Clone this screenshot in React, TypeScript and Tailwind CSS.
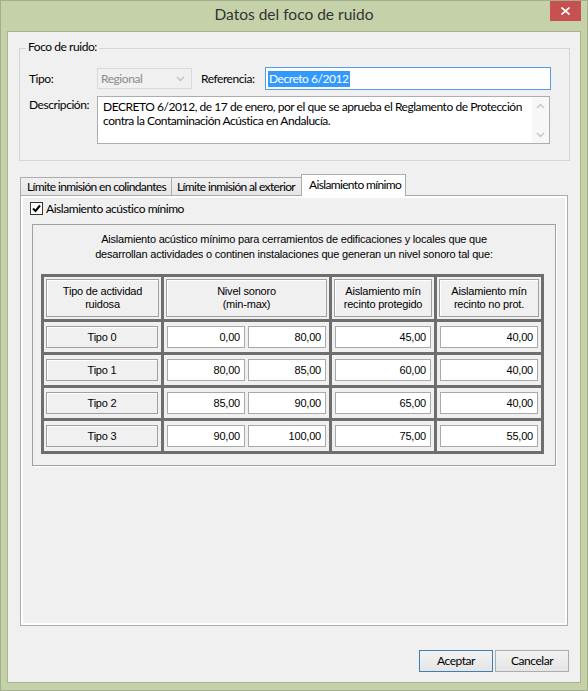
import React from "react"

const rows = [
  { tipo: "Tipo 0", min: "0,00", max: "80,00", prot: "45,00", noProt: "40,00" },
  { tipo: "Tipo 1", min: "80,00", max: "85,00", prot: "60,00", noProt: "40,00" },
  { tipo: "Tipo 2", min: "85,00", max: "90,00", prot: "65,00", noProt: "40,00" },
  { tipo: "Tipo 3", min: "90,00", max: "100,00", prot: "75,00", noProt: "55,00" },
]

function Chevron({ up = false, color = "#b5b5b5" }: { up?: boolean; color?: string }) {
  return (
    <svg width="9" height="6" viewBox="0 0 9 6">
      <path d={up ? "M1 5 L4.5 1.5 L8 5" : "M1 1 L4.5 4.5 L8 1"} fill="none" stroke={color} strokeWidth="1.3" />
    </svg>
  )
}

function LabelBox({ children, tall = false }: { children: React.ReactNode; tall?: boolean }) {
  return (
    <div
      className={`flex-1 flex items-center justify-center text-center border border-[#a0a0a0] shadow-[inset_1px_1px_0_#ffffff] bg-[#f0f0f0] ${
        tall ? "leading-[13px]" : ""
      }`}
    >
      {children}
    </div>
  )
}

function NumBox({ value }: { value: string }) {
  return (
    <div className="flex-1 h-full flex items-center justify-end pr-[4px] bg-white border border-[#a9a9a9]">
      {value}
    </div>
  )
}

export default function App() {
  return (
    <div className="w-[588px] h-[691px] bg-[#c5d1a9] border border-[#a3ae8b] relative font-['Lato',sans-serif] text-[12px] tracking-[-0.45px] text-black">
      {/* Title bar */}
      <div className="h-[30px] flex items-center justify-center pb-[2px] text-[15.5px] tracking-normal text-[#333333]">
        Datos del foco de ruido
      </div>
      <div className="absolute top-0 right-[6px] w-[31px] h-[20px] bg-[#c75050] flex items-center justify-center">
        <svg width="9" height="8" viewBox="0 0 9 8">
          <path d="M0.5 0.5 L8.5 7.5 M8.5 0.5 L0.5 7.5" stroke="#ffffff" strokeWidth="1.6" />
        </svg>
      </div>

      {/* Client area */}
      <div className="ml-[6px] w-[574px] h-[652px] bg-[#f0f0f0] border border-[#a9b391] flex flex-col">
        {/* Group box */}
        <div className="relative mt-[16px] ml-[11px] w-[551px] h-[113px] border border-[#d5d5d5] pt-[18px] pl-[9px]">
          <span className="absolute -top-[10px] left-[6px] px-[2px] bg-[#f0f0f0] leading-[16px]">Foco de ruido:</span>

          <div className="flex items-center h-[23px]">
            <div className="w-[68px]">Tipo:</div>
            <div className="w-[95px] h-[21px] border border-[#d9d9d9] bg-[#f0f0f0] flex items-center justify-between pl-[3px] pr-[6px] text-[#8a8a8a]">
              <span>Regional</span>
              <Chevron color="#c0c0c0" />
            </div>
            <div className="ml-[9px] w-[64px]">Referencia:</div>
            <div className="w-[286px] h-[23px] border border-[#569de5] bg-white flex items-center pl-[2px]">
              <span className="bg-[#3399ff] text-white leading-[16px] px-[1px]">Decreto 6/2012</span>
            </div>
          </div>

          <div className="flex mt-[6px]">
            <div className="w-[68px] pt-[1px] leading-[16px]">Descripción:</div>
            <div className="w-[453px] h-[48px] border border-[#abadb3] bg-white flex">
              <div className="flex-1 pl-[5px] pt-[3px] leading-[14px] whitespace-nowrap">
                DECRETO 6/2012, de 17 de enero, por el que se aprueba el Reglamento de Protección
                <br />
                contra la Contaminación Acústica en Andalucía.
              </div>
              <div className="w-[17px] flex flex-col justify-between bg-[#f7f7f7]">
                <div className="h-[17px] flex items-center justify-center">
                  <Chevron up color="#c4c4c4" />
                </div>
                <div className="h-[17px] flex items-center justify-center">
                  <Chevron color="#c4c4c4" />
                </div>
              </div>
            </div>
          </div>
        </div>

        {/* Tabs */}
        <div className="mt-[13px] ml-[12px] flex items-end h-[21px] tracking-[-0.65px]">
          <div className="w-[152px] h-[18px] border border-b-0 border-[#acacac] bg-gradient-to-b from-[#f0f0f0] to-[#e5e5e5] pl-[6px] flex items-center whitespace-nowrap">
            Límite inmisión en colindantes
          </div>
          <div className="-ml-px w-[131px] h-[18px] border border-b-0 border-[#acacac] bg-gradient-to-b from-[#f0f0f0] to-[#e5e5e5] pl-[5px] flex items-center whitespace-nowrap">
            Límite inmisión al exterior
          </div>
          <div className="-ml-px -mb-px relative z-10 w-[105px] h-[22px] border border-b-0 border-[#acacac] bg-white pl-[7px] pb-[2px] flex items-center whitespace-nowrap">
            Aislamiento mínimo
          </div>
        </div>

        {/* Tab pane */}
        <div className="ml-[12px] w-[548px] h-[431px] border border-[#acacac] bg-white p-[2px]">
          <div className="h-full bg-[#f0f0f0] pt-[4px]">
            <div className="flex items-center pl-[7px] h-[13px]">
              <div className="w-[13px] h-[13px] border border-[#333333] bg-white flex items-center justify-center">
                <svg width="11" height="11" viewBox="0 0 11 11">
                  <path d="M2 5.5 L4.5 8 L9 2.5" fill="none" stroke="#000000" strokeWidth="2" />
                </svg>
              </div>
              <span className="ml-[3px] leading-[16px]">Aislamiento acústico mínimo</span>
            </div>

            <div className="ml-[9px] mt-[9px] w-[524px] h-[242px] border border-[#a0a0a0] shadow-[1px_1px_0_#ffffff] pt-[7px] font-['Liberation_Sans',sans-serif] text-[11px] tracking-[-0.2px]">
              <p className="text-center leading-[15px]">
                Aislamiento acústico mínimo para cerramientos de edificaciones y locales que que
                <br />
                desarrollan actividades o continen instalaciones que generan un nivel sonoro tal que:
              </p>

              <div className="ml-[8px] mt-[12px] w-[503px] grid grid-cols-[117px_165px_102px_104px] grid-rows-[42px_30px_30px_30px_30px] gap-[3px] p-[3px] bg-[#6e6e6e]">
                <div className="bg-[#f0f0f0] p-[2px] flex">
                  <LabelBox tall>
                    Tipo de actividad
                    <br />
                    ruidosa
                  </LabelBox>
                </div>
                <div className="bg-[#f0f0f0] p-[2px] flex">
                  <LabelBox tall>
                    Nivel sonoro
                    <br />
                    (min-max)
                  </LabelBox>
                </div>
                <div className="bg-[#f0f0f0] p-[2px] flex">
                  <LabelBox tall>
                    Aislamiento mín
                    <br />
                    recinto protegido
                  </LabelBox>
                </div>
                <div className="bg-[#f0f0f0] p-[2px] flex">
                  <LabelBox tall>
                    Aislamiento mín
                    <br />
                    recinto no prot.
                  </LabelBox>
                </div>

                {rows.map((r) => (
                  <React.Fragment key={r.tipo}>
                    <div className="bg-[#f0f0f0] pl-[2px] pr-[3px] py-[4px] flex">
                      <LabelBox>{r.tipo}</LabelBox>
                    </div>
                    <div className="bg-[#f0f0f0] px-[3px] py-[4px] flex gap-[3px]">
                      <NumBox value={r.min} />
                      <NumBox value={r.max} />
                    </div>
                    <div className="bg-[#f0f0f0] px-[3px] py-[4px] flex">
                      <NumBox value={r.prot} />
                    </div>
                    <div className="bg-[#f0f0f0] px-[3px] py-[4px] flex">
                      <NumBox value={r.noProt} />
                    </div>
                  </React.Fragment>
                ))}
              </div>
            </div>
          </div>
        </div>

        {/* Buttons */}
        <div className="mt-[24px] pr-[11px] flex justify-end gap-[2px]">
          <button className="w-[74px] h-[22px] border border-[#3c7fb1] bg-gradient-to-b from-[#f2f2f2] to-[#e5e5e5]">
            Aceptar
          </button>
          <button className="w-[74px] h-[22px] border border-[#acacac] bg-gradient-to-b from-[#f2f2f2] to-[#e5e5e5]">
            Cancelar
          </button>
        </div>
      </div>
    </div>
  )
}
